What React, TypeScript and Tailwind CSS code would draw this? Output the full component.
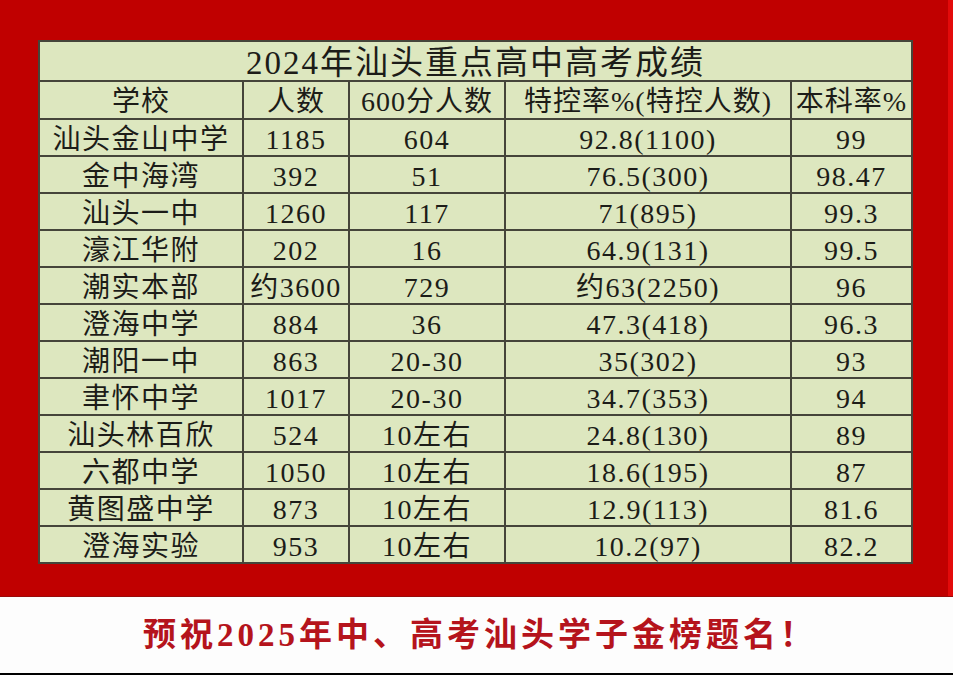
import React from "react";

const rows: [string, string, string, string, string][] = [
  ["汕头金山中学", "1185", "604", "92.8(1100)", "99"],
  ["金中海湾", "392", "51", "76.5(300)", "98.47"],
  ["汕头一中", "1260", "117", "71(895)", "99.3"],
  ["濠江华附", "202", "16", "64.9(131)", "99.5"],
  ["潮实本部", "约3600", "729", "约63(2250)", "96"],
  ["澄海中学", "884", "36", "47.3(418)", "96.3"],
  ["潮阳一中", "863", "20-30", "35(302)", "93"],
  ["聿怀中学", "1017", "20-30", "34.7(353)", "94"],
  ["汕头林百欣", "524", "10左右", "24.8(130)", "89"],
  ["六都中学", "1050", "10左右", "18.6(195)", "87"],
  ["黄图盛中学", "873", "10左右", "12.9(113)", "81.6"],
  ["澄海实验", "953", "10左右", "10.2(97)", "82.2"],
];

const headers = ["学校", "人数", "600分人数", "特控率%(特控人数)", "本科率%"];

const font = {
  fontFamily: '"Liberation Serif", "Noto Sans CJK SC", serif',
};

export default function App() {
  return (
    <div className="w-[953px] h-[676px] flex flex-col bg-white overflow-hidden" style={font}>
      <div className="flex h-[597px] bg-[#c00000] border-b border-[#9a0a0a]">
        <div className="flex-1 pl-[38px] pt-[40px]">
          <div className="w-[875px] bg-[#45453a] p-[2px]">
            <div className="grid grid-cols-[202px_104px_154px_284px_119px] gap-[2px] text-[#1c1c18]">
              <div className="col-span-5 h-[38px] pt-[5px] bg-[#dde7bf] flex items-center justify-center text-[33px] tracking-[2px] leading-none">
                2024年汕头重点高中高考成绩
              </div>
              {headers.map((h, i) => (
                <div
                  key={"h" + i}
                  className="h-[36px] pt-[4px] bg-[#dde7bf] flex items-center justify-center text-[28px] tracking-[1px] leading-none whitespace-nowrap"
                >
                  {h}
                </div>
              ))}
              {rows.map((r, ri) =>
                r.map((c, ci) => (
                  <div
                    key={ri + "-" + ci}
                    className="h-[35px] pt-[5px] bg-[#dde7bf] flex items-center justify-center text-[28px] tracking-[1.5px] leading-none whitespace-nowrap"
                  >
                    {c}
                  </div>
                ))
              )}
            </div>
          </div>
        </div>
        <div className="w-[5px] bg-[#e30a0a]" />
      </div>
      <div className="h-[76px] flex items-center pl-[143px] bg-[#fdfdfd]">
        <span className="text-[33px] font-bold tracking-[4px] text-[#b5141c] leading-none whitespace-nowrap">
          预祝2025年中、高考汕头学子金榜题名！
        </span>
      </div>
      <div className="h-[2px] bg-black" />
    </div>
  );
}
